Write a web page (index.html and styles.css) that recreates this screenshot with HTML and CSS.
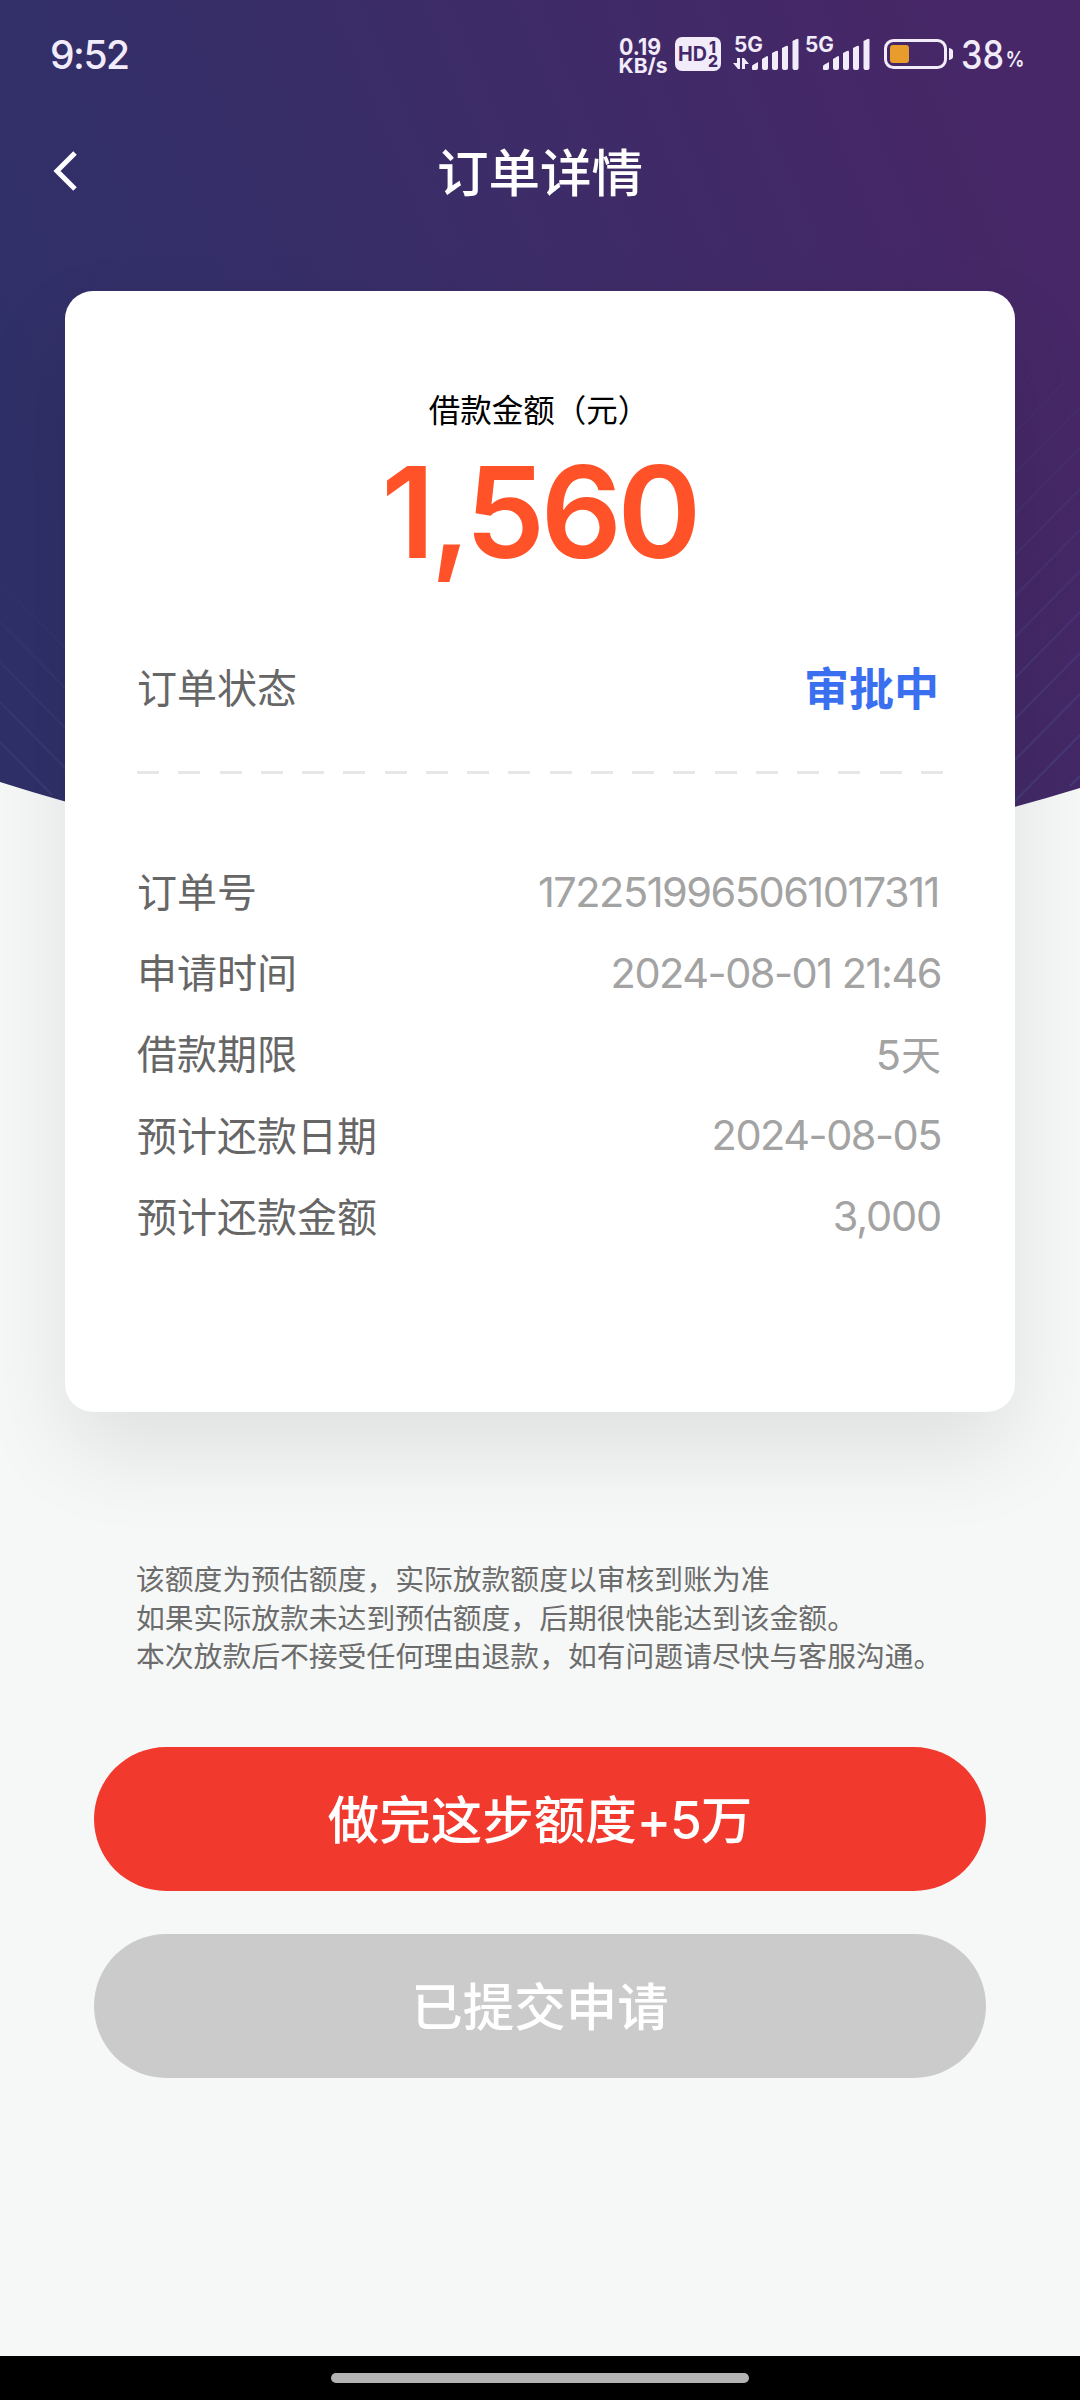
FILE: index.html
```html
<!DOCTYPE html>
<html lang="zh-CN">
<head>
<meta charset="utf-8">
<title>订单详情</title>
<link rel="stylesheet" href="styles.css">
</head>
<body>
<div class="screen">
  <svg class="hero" width="1080" height="880" viewBox="0 0 1080 880" aria-hidden="true">
    <defs>
      <linearGradient id="sky" gradientUnits="userSpaceOnUse" x1="0" y1="400" x2="960" y2="0">
        <stop offset="0" stop-color="#2f3068"/>
        <stop offset=".45" stop-color="#3a2d68"/>
        <stop offset=".85" stop-color="#442867"/>
        <stop offset="1" stop-color="#472767"/>
      </linearGradient>
      <linearGradient id="fadeRight" gradientUnits="userSpaceOnUse" x1="0" y1="300" x2="0" y2="800">
        <stop offset="0" stop-color="#5064a0" stop-opacity="0"/>
        <stop offset="1" stop-color="#5064a0" stop-opacity=".28"/>
      </linearGradient>
      <linearGradient id="fadeLeft" gradientUnits="userSpaceOnUse" x1="0" y1="560" x2="0" y2="820">
        <stop offset="0" stop-color="#6a6aa8" stop-opacity="0"/>
        <stop offset="1" stop-color="#6a6aa8" stop-opacity=".2"/>
      </linearGradient>
    </defs>
    <path fill="url(#sky)" d="M0 0H1080V788Q540 954 0 782Z"/>
    <path fill="none" stroke="url(#fadeRight)" stroke-width="2" d="M1015 391l65-66M1015 432l65-66M1015 473l65-66M1015 514l65-66M1015 555l65-66M1015 596l65-66M1015 637l65-66M1015 678l65-66M1015 719l65-66M1015 760l65-66M1015 801l65-66M1070 786l10-10"/>
    <path fill="none" stroke="url(#fadeLeft)" stroke-width="2" d="M0 582l65 66M0 622l65 66M0 662l65 66M0 702l65 66M0 742l52 53"/>
  </svg>

  <header class="status-bar">
    <span class="clock">9:52</span>
    <svg class="status-icons" width="414" height="56" viewBox="613 26 414 56">
      <g fill="#f1ebfa" class="status-text">
        <text x="619" y="54.500" font-size="23" font-weight="700" textLength="42" lengthAdjust="spacingAndGlyphs">0.19</text>
        <text x="618.500" y="73" font-size="20.500" font-weight="700" textLength="49" lengthAdjust="spacingAndGlyphs">KB/s</text>
        <rect x="675" y="37" width="46" height="34" rx="7"/>
        <g fill="#422868">
          <text x="678" y="61" font-size="20" font-weight="700" textLength="29" lengthAdjust="spacingAndGlyphs">HD</text>
          <text x="709" y="53" font-size="16" font-weight="800" textLength="7" lengthAdjust="spacingAndGlyphs">1</text>
          <text x="708" y="67" font-size="16" font-weight="800" textLength="10" lengthAdjust="spacingAndGlyphs">2</text>
        </g>
        <text x="734" y="52" font-size="21" font-weight="700" textLength="29" lengthAdjust="spacingAndGlyphs">5G</text>
        <path d="M737 58h3v11h-2l-5-6h4zM742 58h2l5 6h-4v5h-3z"/>
        <path id="bars" d="M752 69v-3q0-1 6-4v6q0 2-2 2h-3q-1 0-1-1zM762 59l5-3q1 0 1 1v11q0 2-2 2h-2q-2 0-2-2zM772 53l4-2q2-1 2 1v16q0 2-2 2h-2q-2 0-2-2zM782 48l4-2q2-1 2 1v21q0 2-2 2h-2q-2 0-2-2zM792.500 41l4-2q2-1 2 1v28q0 2-2 2h-2q-2 0-2-2z"/>
        <text x="805" y="52" font-size="21" font-weight="700" textLength="29" lengthAdjust="spacingAndGlyphs">5G</text>
        <use href="#bars" x="71"/>
        <rect x="885.500" y="40.500" width="60" height="27" rx="8" fill="none" stroke="#f1ebfa" stroke-width="3"/>
        <rect x="890" y="45" width="19" height="18" rx="3" fill="#e79c2c"/>
        <path d="M949 48q4 1 4 3v6q0 2-4 3z"/>
        <text x="961" y="68.500" font-size="39" font-weight="500" textLength="43" lengthAdjust="spacingAndGlyphs">38</text>
        <text x="1005.500" y="67" font-size="22" font-weight="600" textLength="19" lengthAdjust="spacingAndGlyphs">%</text>
      </g>
    </svg>
  </header>

  <nav class="nav-bar">
    <svg class="back" width="28" height="44" viewBox="0 0 28 44" aria-label="返回"><path d="M25 4 7 22 25 40" fill="none" stroke="#fff" stroke-width="5"/></svg>
    <h1 class="title">订单详情</h1>
  </nav>

  <main class="card">
    <p class="amount-label">借款金额（元）</p>
    <p class="amount">1,560</p>
    <div class="row state"><span>订单状态</span><strong>审批中</strong></div>
    <div class="divider"></div>
    <dl class="details">
      <div class="row"><dt>订单号</dt><dd class="order-no">1722519965061017311</dd></div>
      <div class="row"><dt>申请时间</dt><dd class="datetime">2024-08-01 21:46</dd></div>
      <div class="row"><dt>借款期限</dt><dd class="term">5<span class="unit">天</span></dd></div>
      <div class="row"><dt>预计还款日期</dt><dd class="date">2024-08-05</dd></div>
      <div class="row"><dt>预计还款金额</dt><dd class="due">3,000</dd></div>
    </dl>
  </main>

  <p class="notes">该额度为预估额度，实际放款额度以审核到账为准<br>如果实际放款未达到预估额度，后期很快能达到该金额。<br>本次放款后不接受任何理由退款，如有问题请尽快与客服沟通。</p>

  <div class="actions">
    <button class="btn primary">做完这步额度<span class="plus">+5</span>万</button>
    <button class="btn disabled">已提交申请</button>
  </div>

  <footer class="home-bar"><span class="handle"></span></footer>
</div>
</body>
</html>
```
FILE: styles.css
```css
* { box-sizing: border-box; }
body {
  margin: 0;
  font-family: Inter, "Noto Sans CJK SC", sans-serif;
}
p, h1, dl, dd { margin: 0; }
.screen {
  position: relative;
  display: flex;
  flex-direction: column;
  width: 1080px;
  height: 2400px;
  background: #f6f8f7;
  overflow: hidden;
  isolation: isolate;
}
.hero {
  position: absolute;
  top: 0;
  left: 0;
  z-index: -1;
}
.status-bar {
  display: flex;
  justify-content: space-between;
  align-items: center;
  height: 108px;
  padding: 0 53px 0 50px;
}
.clock {
  color: #f1ebfa;
  font-size: 39px;
  font-weight: 500;
  letter-spacing: -1.5px;
}
.status-text { font-family: Inter, sans-serif; }
.nav-bar {
  display: grid;
  grid-template-columns: 180px 1fr 180px;
  align-items: center;
  height: 126px;
}
.back { margin-left: 50px; }
.title {
  padding-top: 3px;
  color: #fff;
  font-size: 51.500px;
  font-weight: 500;
  line-height: 60px;
  text-align: center;
}
.card {
  display: flex;
  flex-direction: column;
  height: 1121px;
  margin: 57px 65px 0;
  padding: 96px 74px 0 72px;
  background: #fff;
  border-radius: 28px;
  box-shadow: 0 40px 90px rgba(0, 0, 0, .095);
}
.amount-label {
  color: #000;
  font-size: 31.500px;
  line-height: 48px;
  text-align: center;
}
.amount {
  height: 156px;
  color: #ff5229;
  font-size: 127px;
  font-weight: 600;
  line-height: 154px;
  letter-spacing: -4.500px;
  text-align: center;
}
.row {
  display: flex;
  justify-content: space-between;
  align-items: center;
  height: 81.200px;
  color: #666;
  font-size: 40px;
}
.state {
  height: 80px;
  margin-top: 55px;
}
.state strong {
  padding-right: 2px;
  color: #3a70f0;
  font-size: 45px;
  font-weight: 700;
}
.divider {
  width: 806px;
  height: 3px;
  margin-top: 45px;
  background: repeating-linear-gradient(90deg, #e7e7e7 0 22px, transparent 22px 41.250px);
}
.details { margin-top: 76px; }
dt { padding-bottom: 1px; }
dd {
  padding-top: 2px;
  color: #a3a3a3;
  font-size: 41.500px;
}
.order-no {
  padding-right: 2px;
  letter-spacing: -1.500px;
}
.datetime { letter-spacing: -1.500px; }
.date { letter-spacing: -1.500px; }
.due { letter-spacing: -1.200px; }
.unit { font-size: 40px; }
.term { padding: 0; }
.notes {
  margin: 149px 0 0 136px;
  color: #6c6c6c;
  font-size: 28.800px;
  line-height: 38.600px;
  white-space: nowrap;
}
.actions {
  display: flex;
  flex-direction: column;
  gap: 43px;
  margin: 70px 94px 0;
}
.btn {
  height: 144px;
  border: 0;
  border-radius: 72px;
  color: #fff;
  font: 500 51.500px/144px Inter, "Noto Sans CJK SC", sans-serif;
}
.primary { background: #f2392e; }
.disabled { background: #cbcbcb; }
.plus { letter-spacing: -1px; }
.home-bar {
  display: flex;
  justify-content: center;
  height: 44px;
  margin-top: auto;
  padding-top: 17px;
  background: #000;
}
.handle {
  width: 418px;
  height: 10px;
  border-radius: 5px;
  background: #b3b3b3;
}
```
